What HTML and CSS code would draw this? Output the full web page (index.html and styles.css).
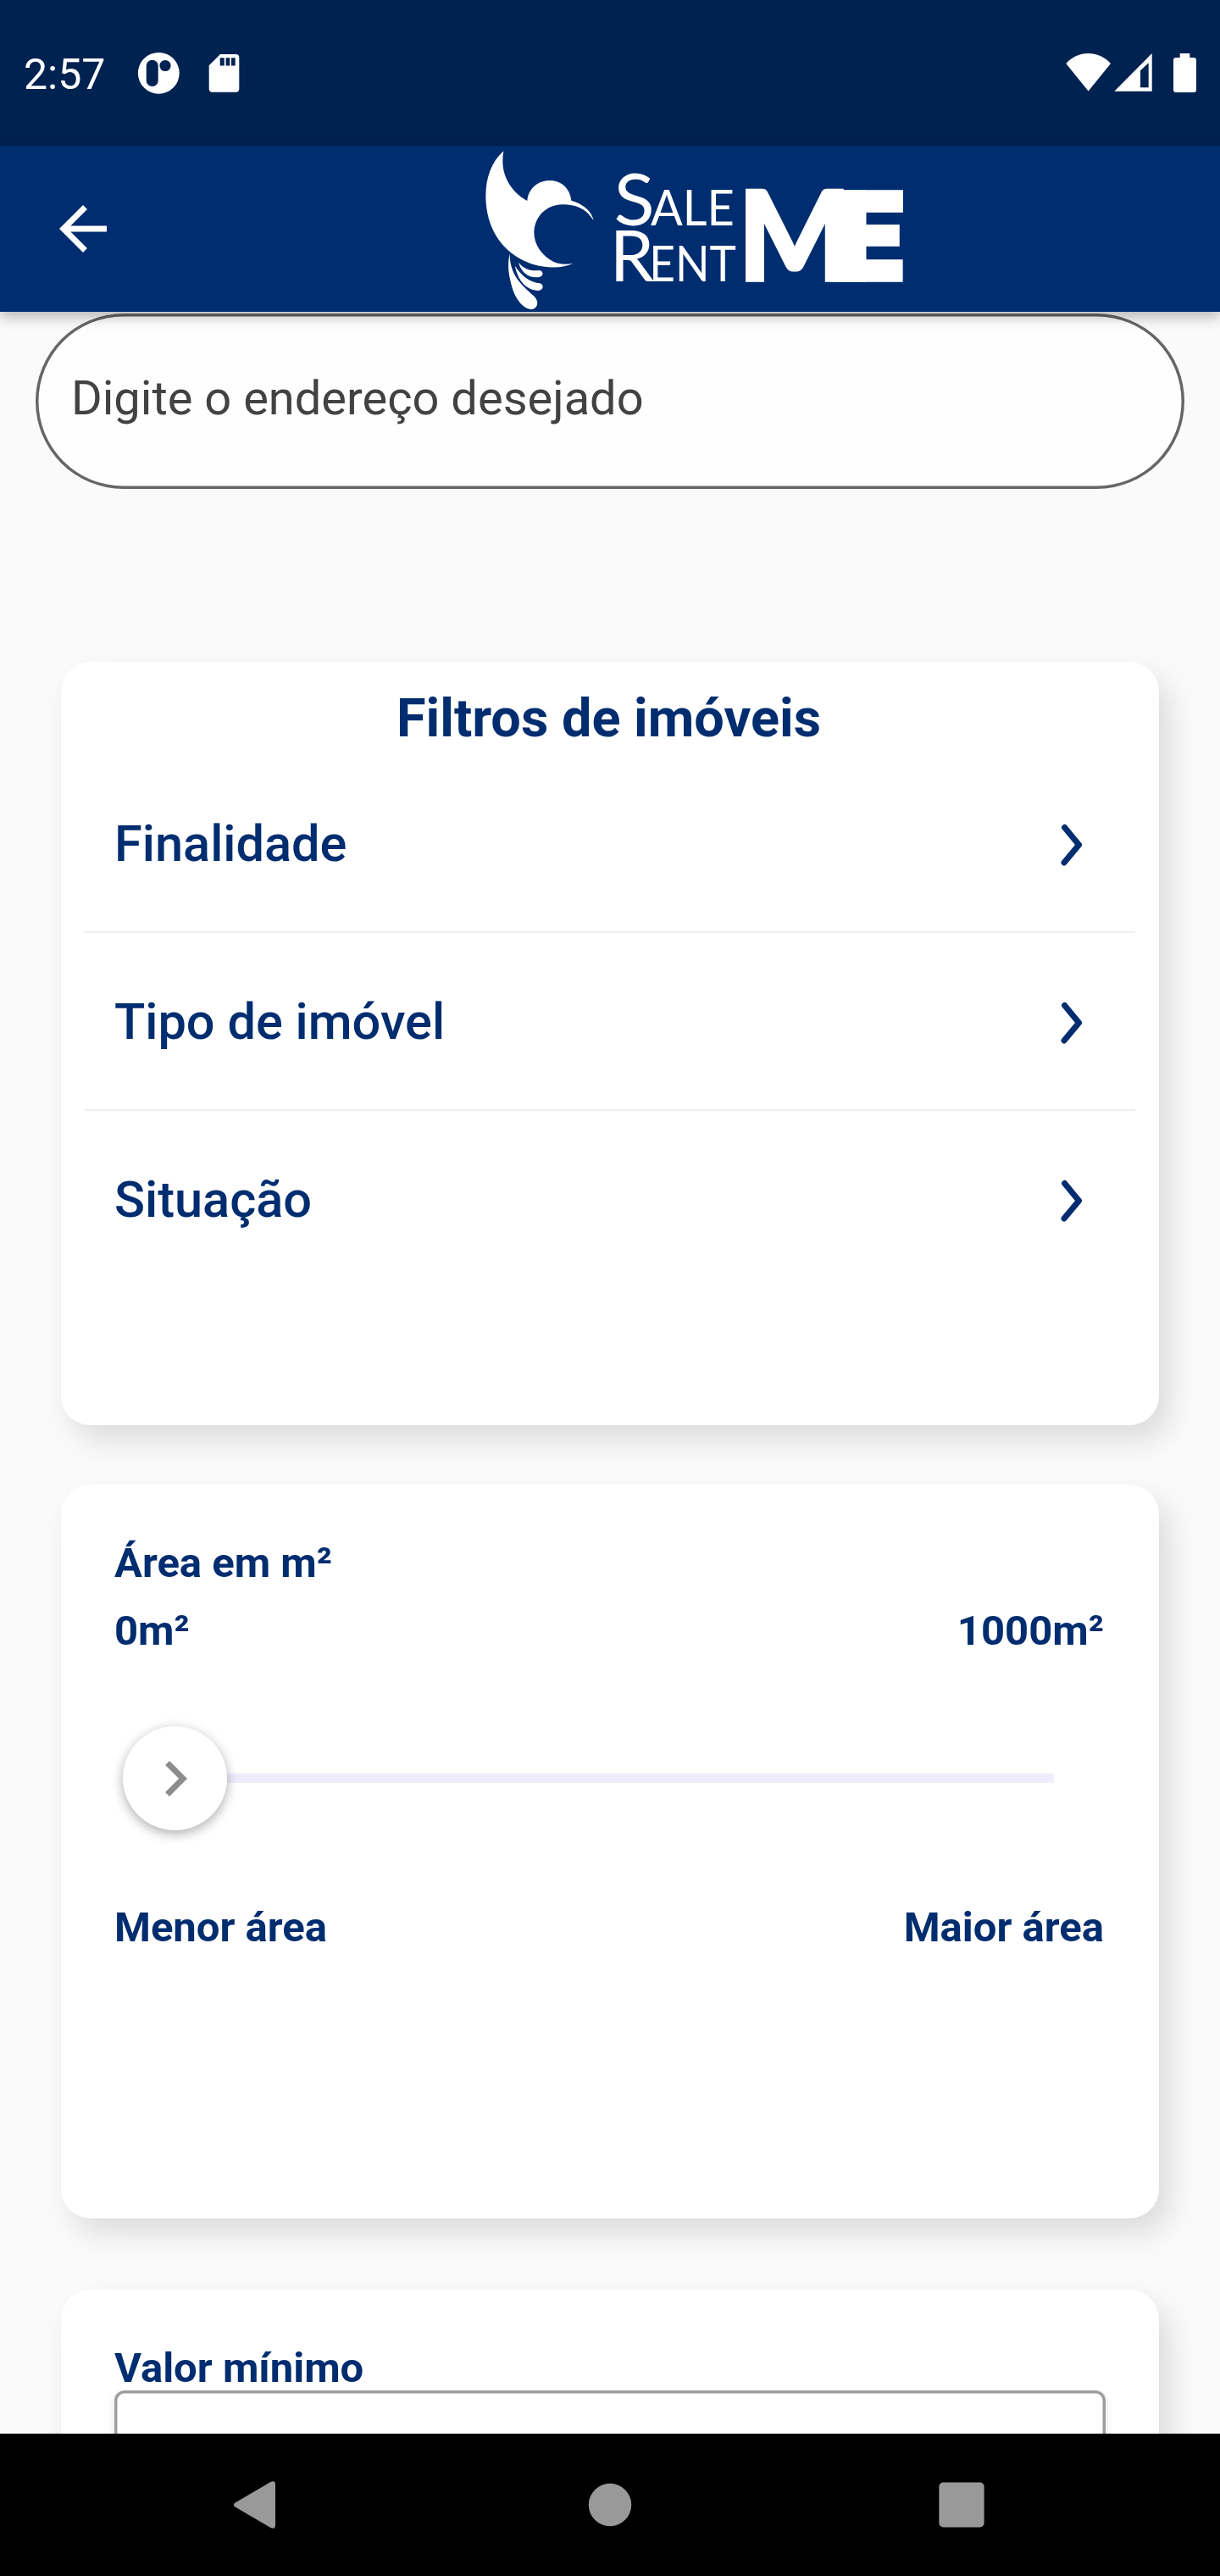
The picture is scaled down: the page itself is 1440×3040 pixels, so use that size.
FILE: index.html
```html
<!DOCTYPE html>
<html lang="pt-BR">
<head>
<meta charset="utf-8">
<title>Sale Rent ME</title>
<link rel="stylesheet" href="styles.css">
</head>
<body>
<div class="status">
  <span class="time">2:57</span>
  <svg class="status-icons" width="130" height="172" viewBox="156 0 130 172" fill="#fff">
    <circle cx="187.3" cy="86.3" r="24.4"/>
    <rect class="hole" x="172.7" y="70.7" width="14" height="31.3" rx="7"/>
    <circle class="hole" cx="195" cy="77.5" r="6.6"/>
    <path d="M260 64h18.300a4 4 0 0 1 4 4v36.700a4 4 0 0 1-4 4h-27.600a4 4 0 0 1-4-4V77.300z"/>
    <path class="hole" d="M259.700 68.300h5v9.300h-5zM266.600 68.300h4.700v9.300h-4.700zM273 68.300h4.700v9.300H273z"/>
  </svg>
  <svg class="status-icons push" width="160" height="172" viewBox="1256 0 160 172" fill="#fff">
    <path d="M1284.600 107.500 1258.300 75c14-16 38.500-16 52.700 0z"/>
    <path fill-rule="evenodd" d="M1315.300 107.700h44.400V63zM1346 83.300l9.700-9v29h-9.700z"/>
    <path d="M1392.700 63h11.600v5h4.700a3 3 0 0 1 3 3v35a3 3 0 0 1-3 3h-21a3 3 0 0 1-3-3V71a3 3 0 0 1 3-3h4.700z"/>
  </svg>
</div>
<header class="appbar">
  <svg class="back" width="84" height="84" viewBox="0 0 24 24" fill="#fff"><path d="M20 11H7.830l5.590-5.590L12 4l-8 8 8 8 1.410-1.410L7.830 13H20v-2z"/></svg>
  <svg class="logo" width="540" height="196" viewBox="0 21 1568 588" preserveAspectRatio="none" fill="#fff">
    <path d="M129 40C85 80 66 140 68 210c4 120 70 200 160 230 55 17 105 14 140-3-22 5-48 5-66-4-46-24-74-70-68-118 8-54 50-86 98-86 50 0 84 20 105 57-6-34-34-58-76-71-4-42-34-71-73-71-42 0-74 28-78 72-56-32-96-94-81-176z"/>
    <path d="M150 402c0 70 30 104 84 152 22 24 6 46-10 46-30-2-56-40-66-78-10-36-18-74-8-120z"/>
    <path d="M168 446c22 36 50 58 86 62 14 6 12 24-6 26-40-2-70-34-80-88z"/>
    <path d="M180 434c18 22 40 32 72 28 14 2 16 22-2 24-34 4-60-14-70-52z"/>
    <g class="word">
      <text y="302"><tspan x="507" font-size="255" textLength="140" lengthAdjust="spacingAndGlyphs">S</tspan><tspan x="633" font-size="173" textLength="287" lengthAdjust="spacingAndGlyphs">ALE</tspan></text>
      <text y="502"><tspan x="493" font-size="252" textLength="152" lengthAdjust="spacingAndGlyphs">R</tspan><tspan x="628" font-size="173" textLength="298" lengthAdjust="spacingAndGlyphs">ENT</tspan></text>
    </g>
    <rect x="1268" y="177" width="104" height="327"/>
    <text class="me" y="498"><tspan class="m" x="932" font-size="438" textLength="388" lengthAdjust="spacingAndGlyphs">M</tspan><tspan x="1241" font-size="434" textLength="270" lengthAdjust="spacingAndGlyphs">E</tspan></text>
  </svg>
</header>
<main class="content">
  <div class="search">Digite o endereço desejado</div>
  <section class="card filters">
    <h1 class="title">Filtros de imóveis</h1>
    <div class="row"><span>Finalidade</span><svg class="chev" width="26" height="52" viewBox="0 0 26 52"><path d="M4.600 5.500 21.500 26 4 47"/></svg></div>
    <div class="row"><span>Tipo de imóvel</span><svg class="chev" width="26" height="52" viewBox="0 0 26 52"><path d="M4.600 5.500 21.500 26 4 47"/></svg></div>
    <div class="row last"><span>Situação</span><svg class="chev" width="26" height="52" viewBox="0 0 26 52"><path d="M4.600 5.500 21.500 26 4 47"/></svg></div>
  </section>
  <section class="card area">
    <div class="line">Área em m²</div>
    <div class="line"><span>0m²</span><span>1000m²</span></div>
    <div class="slider">
      <div class="knob"><svg width="84" height="84" viewBox="0 0 24 24" fill="#8c8c8c"><path d="M10 6 8.590 7.410 13.170 12l-4.580 4.590L10 18l6-6z"/></svg></div>
      <div class="track"></div>
    </div>
    <div class="line"><span>Menor área</span><span>Maior área</span></div>
  </section>
  <section class="card price">
    <div class="label">Valor mínimo</div>
    <div class="input"></div>
  </section>
</main>
<nav class="navbar">
  <svg width="1440" height="168" viewBox="0 2872 1440 168" fill="#999">
    <path d="M319 2929.200q6-3 6 3v47.600q0 6-6 3l-41-24q-4.500-2.800 0-5.600z"/>
    <circle cx="720" cy="2956" r="25.200"/>
    <rect x="1108.400" y="2929.500" width="53.200" height="53" rx="5"/>
  </svg>
</nav>
</body>
</html>
```
FILE: styles.css
```css
* { box-sizing: border-box; }
body {
  margin: 0;
  width: 1440px;
  height: 3040px;
  display: flex;
  flex-direction: column;
  overflow: hidden;
  background: #fafafa;
  font-family: Roboto, "Liberation Sans", sans-serif;
  color: #002d6f;
}
svg { display: block; flex: none; }

.status {
  flex: none;
  height: 172px;
  display: flex;
  align-items: center;
  padding-right: 24px;
  background: #002251;
  color: #fff;
}
.time { width: 156px; padding: 4px 0 0 28px; font-size: 50px; line-height: 58px; }
.hole { fill: #002251; }
.push { margin-left: auto; }

.appbar {
  position: relative;
  z-index: 1;
  flex: none;
  height: 196px;
  display: flex;
  align-items: center;
  padding-left: 56px;
  background: #002d6f;
  box-shadow: 0 5px 16px rgba(0, 0, 0, .3);
}
.logo { margin-left: 410px; }
.word { font-family: Lato, sans-serif; font-weight: 400; }
.me { font-family: Inter, sans-serif; font-weight: 900; stroke: #fff; stroke-width: 10; }
.m { font-family: Lato, sans-serif; }

.content { flex: 1; min-height: 0; overflow: hidden; padding-top: 2px; }
.search {
  height: 207px;
  margin: 0 42px 204px;
  padding: 0 42px 7px;
  display: flex;
  align-items: center;
  border-radius: 104px;
  background: #fefefe;
  box-shadow: inset 0 0 0 3.5px #666;
  font-size: 56px;
  color: #424242;
}

.card {
  width: 1296px;
  margin: 0 72px;
  border-radius: 35px;
  background: #fff;
  box-shadow: 13px 18px 34px rgba(0, 0, 0, .12);
}
.filters { height: 901px; margin-bottom: 70px; padding: 30px 28px 0; }
.title { margin: 0; height: 80px; padding-right: 3px; font-size: 63px; line-height: 74px; font-weight: 700; text-align: center; }
.row {
  height: 210px;
  padding: 0 62px 0 35px;
  display: flex;
  align-items: center;
  justify-content: space-between;
  border-bottom: 2px solid #eee;
  font-size: 59.5px;
  font-weight: 500;
}
.row.last { border-color: transparent; }
.row span { padding-top: 1px; }
.chev { position: relative; top: 2px; fill: none; stroke: #002d6f; stroke-width: 7; stroke-linecap: round; stroke-linejoin: round; }

.area { height: 866px; margin-bottom: 84px; padding: 53px 65px 0 63px; }
.line {
  display: flex;
  justify-content: space-between;
  font-size: 49px;
  line-height: 80px;
  font-weight: 700;
}
.slider { height: 270px; padding: 0 59px 3px 10px; display: flex; align-items: center; }
.knob {
  position: relative;
  flex: none;
  width: 123px;
  height: 123px;
  display: flex;
  align-items: center;
  justify-content: center;
  border-radius: 50%;
  background: #fff;
  box-shadow: 0 4px 14px rgba(0, 0, 0, .32);
}
.track { flex: 1; height: 11px; background: #efedfd; }

.price { height: 500px; padding: 66px 63px 0; }
.label { font-size: 49px; line-height: 53px; font-weight: 700; }
.input {
  height: 207px;
  border-radius: 12px;
  box-shadow: inset 0 0 0 3.5px #9e9e9e, 0 4px 10px rgba(0, 0, 0, .12);
}

.navbar { flex: none; height: 168px; position: relative; z-index: 1; background: #000; }
```
